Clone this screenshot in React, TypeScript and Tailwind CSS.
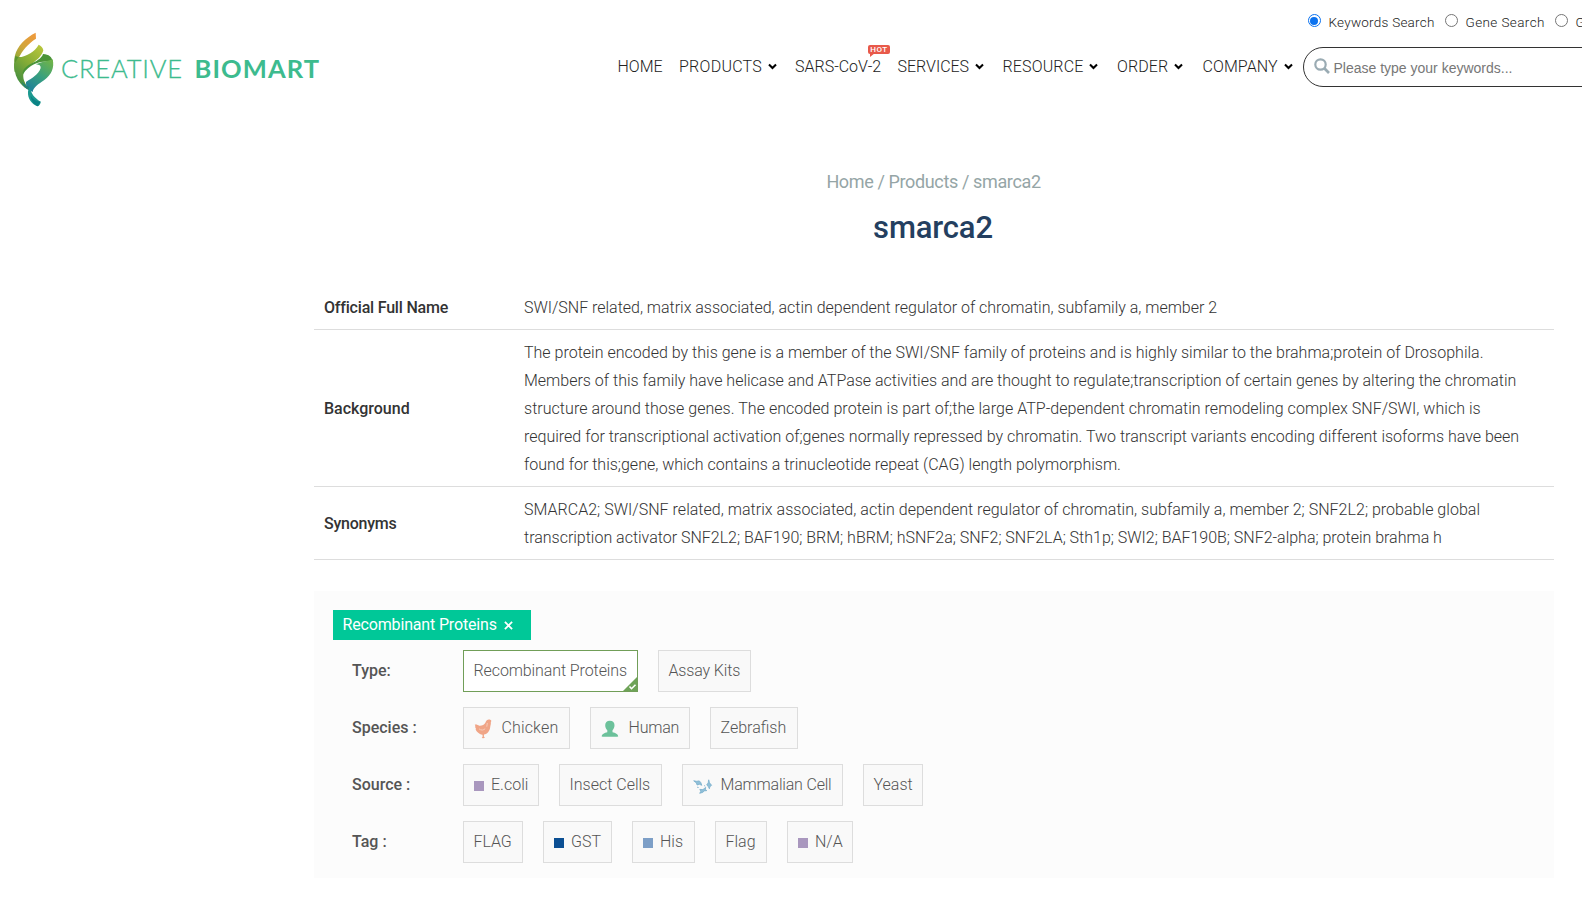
import type { ReactNode } from 'react'
import clsx from 'clsx'

type NavItem = { label: string; cls: string; text?: string; menu?: boolean; hot?: boolean }
type Option = { label: string; cls: string; text?: string; icon?: ReactNode; active?: boolean }

const navItems: NavItem[] = [
  { label: 'HOME', cls: 'w-[61.5px]' },
  { label: 'PRODUCTS', cls: 'w-[116px]', text: 'tracking-[0.26px]', menu: true },
  { label: 'SARS-CoV-2', cls: 'w-[102.5px]', hot: true },
  { label: 'SERVICES', cls: 'w-[105px]', text: 'tracking-[-0.02px]', menu: true },
  { label: 'RESOURCE', cls: 'w-[114.5px]', text: 'tracking-[0.15px]', menu: true },
  { label: 'ORDER', cls: 'w-[85.5px]', text: 'tracking-[0.1px]', menu: true },
  { label: 'COMPANY', cls: 'w-[100px]', text: 'tracking-[0.1px]', menu: true },
]

const details: { name: string; label?: string; lines: [string, string][] }[] = [
  {
    name: 'Official Full Name',
    label: 'tracking-[-0.2px]',
    lines: [['SWI/SNF related, matrix associated, actin dependent regulator of chromatin, subfamily a, member 2', 'tracking-[-0.02px]']],
  },
  {
    name: 'Background',
    lines: [
      ['The protein encoded by this gene is a member of the SWI/SNF family of proteins and is highly similar to the brahma;protein of Drosophila.', 'tracking-[0.011px]'],
      ['Members of this family have helicase and ATPase activities and are thought to regulate;transcription of certain genes by altering the chromatin', 'tracking-normal'],
      ['structure around those genes. The encoded protein is part of;the large ATP-dependent chromatin remodeling complex SNF/SWI, which is', 'tracking-[0.037px]'],
      ['required for transcriptional activation of;genes normally repressed by chromatin. Two transcript variants encoding different isoforms have been', 'tracking-normal'],
      ['found for this;gene, which contains a trinucleotide repeat (CAG) length polymorphism.', 'tracking-normal'],
    ],
  },
  {
    name: 'Synonyms',
    label: 'tracking-[-0.25px]',
    lines: [
      ['SMARCA2; SWI/SNF related, matrix associated, actin dependent regulator of chromatin, subfamily a, member 2; SNF2L2; probable global', 'tracking-[0.026px]'],
      ['transcription activator SNF2L2; BAF190; BRM; hBRM; hSNF2a; SNF2; SNF2LA; Sth1p; SWI2; BAF190B; SNF2-alpha; protein brahma h', 'tracking-[-0.01px]'],
    ],
  },
]

function Square({ color }: { color: string }) {
  return <span className={clsx('w-[10px] h-[10px] mt-[2px] mr-[7.5px]', color)} />
}

function ChickenIcon() {
  return (
    <svg viewBox="0 0 18 20" className="w-[18px] h-5 mt-[2px] mr-[10px]">
      <path d="M.8 5.600c1.500-.6 3 .1 4.400 1.200 2.500.3 5-1 6.300-3.300C12 1.600 13.400.6 14.900.6c1.400 0 2.300.6 2.400 1.400l-.5 1.400c.3 1.400-.3 2.700-.5 4-.3 4.200-2.900 7.600-6.300 8.200l-.1 2 1 1.100-1.600.6-1.600-.3.9-1.300-.1-1.900C5 15.100 2.200 12.600 1.600 10L2 9 .9 8.200l.5-.9Z" fill="#f0a587" />
      <path d="M5 9.800c2 1.900 4.800 1.500 6.200-.2M13.300 4l-.5 3.700" fill="none" stroke="#f7cbb8" strokeWidth="1" />
    </svg>
  )
}

function HumanIcon() {
  return (
    <svg viewBox="0 0 18 18" className="w-[18px] h-[18px] mt-[1px] mr-[10px]">
      <path d="M8.800.8c3.200 0 4.800 1.800 4.700 4.500 0 2.100-.8 3.800-2 4.900v2.100c2.900.8 5.500 1.500 5.700 4.200-2 .4-14.400.4-16.500 0 .2-2.700 2.800-3.400 5.600-4.200v-2.100C5 9.100 4.200 7.400 4.200 5.300 4.200 2.600 5.800.8 8.800.8Z" fill="#6cc19b" />
    </svg>
  )
}

function CellIcon() {
  return (
    <svg viewBox="0 0 20 16" className="w-5 h-4 mt-[3px] mr-[8px]" fill="#8fbfd8" stroke="#79afcb" strokeWidth=".8" strokeLinejoin="round">
      <path d="m.7 1.800 3 .5 2.600-.4 1.500 1.700 1 2.700-2.400-1-2.300.7-.7-2.100Z" />
      <path d="m15.700.8.800 3 2.100 2.500-1.800 1.500-.4 2-1.200-2.500-1.500-1.300 1.500-2.200Z" />
      <path d="m6.800 10.400 3.100.2 2.800-2.200-.3 2.200 1.400 1-2.500.3-1.600 1.500-3 .9 1.100-2Z" />
      <path d="m4 8.200 1.700.3M11 6.500l1.300.7" />
    </svg>
  )
}

const filters: { name: string; options: Option[] }[] = [
  {
    name: 'Type:',
    options: [
      { label: 'Recombinant Proteins', cls: 'w-[175px]', text: 'tracking-[-0.1px]', active: true },
      { label: 'Assay Kits', cls: 'w-[93px]', text: 'tracking-[-0.15px]' },
    ],
  },
  {
    name: 'Species :',
    options: [
      { label: 'Chicken', cls: 'w-[107px]', text: 'tracking-[0.15px]', icon: <ChickenIcon /> },
      { label: 'Human', cls: 'w-[100px]', text: 'tracking-[-0.2px]', icon: <HumanIcon /> },
      { label: 'Zebrafish', cls: 'w-[88px]' },
    ],
  },
  {
    name: 'Source :',
    options: [
      { label: 'E.coli', cls: 'w-[76px]', icon: <Square color="bg-[#a997be]" /> },
      { label: 'Insect Cells', cls: 'w-[103px]' },
      { label: 'Mammalian Cell', cls: 'w-[161px]', text: 'tracking-[-0.19px]', icon: <CellIcon /> },
      { label: 'Yeast', cls: 'w-[60px]' },
    ],
  },
  {
    name: 'Tag :',
    options: [
      { label: 'FLAG', cls: 'w-[60px]', text: 'tracking-[-0.05px]' },
      { label: 'GST', cls: 'w-[69px]', icon: <Square color="bg-[#0b4f93]" /> },
      { label: 'His', cls: 'w-[63px]', icon: <Square color="bg-[#7d9fc7]" /> },
      { label: 'Flag', cls: 'w-[52px]' },
      { label: 'N/A', cls: 'w-[66px]', icon: <Square color="bg-[#a997be]" /> },
    ],
  },
]

function Logo() {
  return (
    <a href="#" className="flex items-start w-[609.5px] pl-2 pt-7 shrink-0 text-[#3dbb8e] font-['Lato',sans-serif]">
      <svg viewBox="0 0 150 252" className="w-[50px] h-[84px] shrink-0">
        <defs>
          <linearGradient id="lg-top" x1=".8" y1="0" x2=".2" y2="1">
            <stop offset="0" stopColor="#ee9a3c" />
            <stop offset=".55" stopColor="#d0a63b" />
            <stop offset="1" stopColor="#8cab38" />
          </linearGradient>
          <linearGradient id="lg-mid" x1=".9" y1="0" x2=".3" y2="1">
            <stop offset="0" stopColor="#b9c63c" />
            <stop offset=".5" stopColor="#84ac36" />
            <stop offset="1" stopColor="#3f8c42" />
          </linearGradient>
          <linearGradient id="lg-low" x1=".8" y1="0" x2=".2" y2="1">
            <stop offset="0" stopColor="#6db24b" />
            <stop offset=".5" stopColor="#38a07f" />
            <stop offset="1" stopColor="#1f7f9c" />
          </linearGradient>
        </defs>
        <path d="M83 14C52 30 28 54 21 82c-2 8-2 14-1 20l13-14c10-20 28-42 51-56Z" fill="url(#lg-top)" />
        <path d="M22 84c22 8 51 7 68-6L48 118l-28 14c-3-17-2-33 2-48Z" fill="#5b942f" />
        <path d="M92 50C81 70 57 86 31 88c-4 8-10 15-12 24 0 22 6 40 18 54 8 10 17 17 27 19-11-15-20-30-18-47 4-25 52-38 60-71-1-8-7-14-14-17Z" fill="url(#lg-mid)" />
        <path d="M105 78c18 1 27 9 30 24-33-4-66 1-91 38-2-34 52-34 61-62Z" fill="#4b9438" />
        <path d="M134 94c6 26-4 47-25 62-18 12-33 22-35 36l-12-6c-6-9-9-15-8-24 16-11 39-23 44-42 1-7-4-10-14-11 18-8 36-9 50-15Z" fill="url(#lg-low)" />
        <path d="M40 160c5 14 13 23 24 27l2-9c-10-4-19-10-26-18Z" fill="#278277" />
        <path d="M65 176c5 22 13 32 33 45 0 6-4 12-9 14-20-8-30-24-29-44 1-6 2-11 5-15Z" fill="#1d9990" />
        <path d="M68 203c7 11 17 17 30 18l-9 14c-12-6-20-18-21-32Z" fill="#0b8285" />
      </svg>
      <span className="flex mt-[22.5px] ml-[3px] text-[25.5px] leading-[34px]">
        <span className="w-[133.500px] font-light tracking-[0.8px] [-webkit-text-stroke:0.3px_#3dbb8e]">CREATIVE</span>
        <span className="font-bold tracking-[1.1px]">BIOMART</span>
      </span>
    </a>
  )
}

function Chevron() {
  return (
    <svg viewBox="0 0 10 8" className="w-[9px] h-[7px] ml-[6px]" fill="none" stroke="#000" strokeWidth="2.400">
      <path d="m1 1.700 4 4 4-4" />
    </svg>
  )
}

function Radio({ label, checked, cls }: { label: string; checked?: boolean; cls: string }) {
  return (
    <label className={clsx('flex items-center shrink-0 whitespace-nowrap', cls)}>
      <span className={clsx('flex items-center justify-center w-[13px] h-[13px] mb-[4px] mr-2 rounded-full border bg-white', checked ? 'border-[#0b72ef]' : 'border-[#767676]')}>
        {checked && <span className="w-[8px] h-[8px] rounded-full bg-[#0b72ef]" />}
      </span>
      {label}
    </label>
  )
}

export default function App() {
  return (
    <div className="w-full h-[902px] overflow-hidden bg-white text-base font-light text-[#333] font-['Roboto',sans-serif]">
      <header className="flex h-[160px] overflow-hidden">
        <Logo />
        <nav className="flex mt-[52.500px] ml-[8px] h-7 shrink-0 text-[#222]">
          {navItems.map(item => (
            <a key={item.label} href="#" className={clsx('relative flex items-center shrink-0 whitespace-nowrap', item.cls)}>
              <span className={item.text}>{item.label}</span>
              {item.menu && <Chevron />}
              {item.hot && (
                <span className="absolute left-[73px] top-[-8px] w-[22px] h-[9px] rounded-[2px] bg-[#e8594a] text-center text-[8px] leading-[9px] font-medium text-white tracking-[0.5px]">
                  HOT
                  <span className="absolute left-[2px] top-[8px] border-t-[4px] border-r-[5px] border-t-[#e8594a] border-r-transparent" />
                </span>
              )}
            </a>
          ))}
        </nav>

        <div className="shrink-0">
          <div className="flex mt-[11.500px] pl-[5px] h-[22px] text-[13.5px] text-[#222]">
            <Radio label="Keywords Search" cls="w-[137px] tracking-[0.24px]" checked />
            <Radio label="Gene Search" cls="w-[110px] tracking-[0.4px]" />
            <Radio label="Gene ID" cls="w-[110px]" />
          </div>
          <div className="flex items-center w-[340px] h-10 mt-[13.500px] pl-[10px] rounded-full border border-[#333] text-[#777] font-['Liberation_Sans',sans-serif] text-[14px] font-normal">
            <svg viewBox="0 0 16 16" className="w-4 h-4 mr-1 mt-[-2px]" fill="none" stroke="#9aabb3">
              <circle cx="6.500" cy="6.500" r="5.200" strokeWidth="2.200" />
              <path d="m10.300 10.300 4.700 4.700" strokeWidth="2.700" />
            </svg>
            <span className="pt-[2px]">Please type your keywords...</span>
          </div>
        </div>
      </header>

      <main className="w-[1240px] ml-[314px]">
        <div className="text-center">
          <p className="pt-[8px] pr-px text-[18px] leading-7 font-normal tracking-[-0.37px] text-[#95a5a6]">Home / Products / smarca2</p>
          <h1 className="mt-[11px] pr-[2px] text-[31px] leading-[42px] font-medium tracking-[-0.15px] text-[#243f60]">smarca2</h1>
        </div>

        <dl className="mt-[36px]">
          {details.map(d => (
            <div key={d.name} className="flex items-center pt-[9px] pb-[7px] pl-[10px] border-b border-[#ddd]">
              <dt className={clsx('w-[200px] shrink-0 font-medium', d.label)}>{d.name}</dt>
              <dd>
                {d.lines.map(([line, tracking]) => (
                  <p key={line} className={clsx('leading-7 whitespace-nowrap', tracking)}>{line}</p>
                ))}
              </dd>
            </div>
          ))}
        </dl>

        {/* Product filters */}
        <section className="h-[287px] mt-[31px] pt-[19px] pl-[19px] bg-[#fcfcfc] text-[#555]">
          <button className="flex items-center w-[198px] h-[30px] pl-[9.500px] bg-[#00c898] font-normal text-white tracking-[-0.16px] whitespace-nowrap">
            Recombinant Proteins
            <svg viewBox="0 0 10 10" className="w-[9px] h-[9px] ml-[7px]" stroke="#fff" strokeWidth="2">
              <path d="m1 1 8 8M9 1 1 9" />
            </svg>
          </button>
          <div className="flex flex-col gap-[15px] mt-[10px]">
            {filters.map(f => (
              <div key={f.name} className="flex h-[42px] pl-[19px]">
                <h3 className="w-[111px] leading-[41px] font-medium">{f.name}</h3>
                <div className="flex gap-5">
                  {f.options.map(o => (
                    <button key={o.label} className={clsx('relative flex items-center pl-[9.500px] border whitespace-nowrap', o.cls, o.active ? 'border-[#719e58] bg-white' : 'border-[#ddd] bg-[#f9f9f9]')}>
                      {o.icon}
                      <span className={o.text}>{o.label}</span>
                      {o.active && (
                        <svg viewBox="0 0 14 14" className="absolute right-0 bottom-0 w-[14px] h-[14px]">
                          <path d="M14 0v14H0Z" fill="#6ea358" />
                          <path d="m6.500 9.500 2 2.200 4-4" fill="none" stroke="#fff" strokeWidth="1.600" />
                        </svg>
                      )}
                    </button>
                  ))}
                </div>
              </div>
            ))}
          </div>
        </section>
      </main>
    </div>
  )
}
